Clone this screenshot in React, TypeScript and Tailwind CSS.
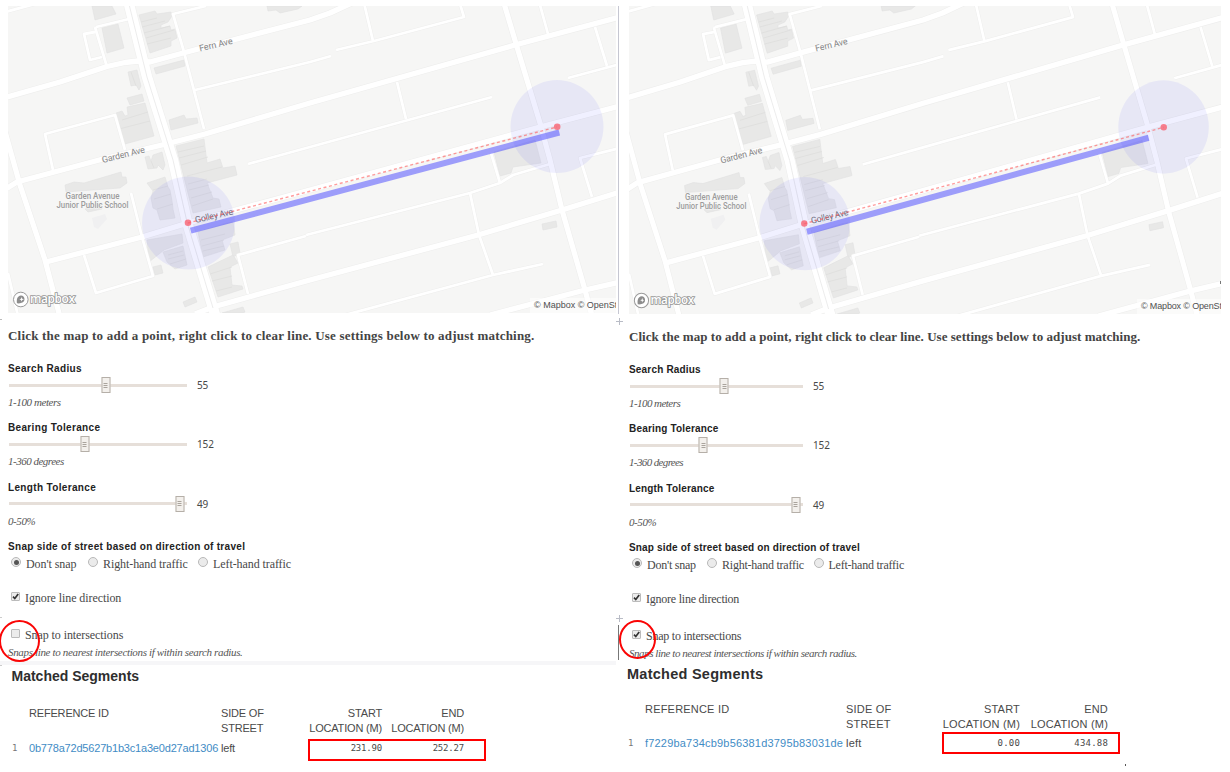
import clsx from "clsx";

type Side = "left" | "right";

const BUILDINGS = [
  "92,6 112,6 116,14 95,20",
  "102,28 118,24 124,48 107,53",
  "139,15 155,11 157,14 171,12 172,16 168,22 161,25 161,28 170,26 171,30 175,29 177,38 171,41 171,46 150,53",
  "154,68 184,60 185,66 156,74",
  "128,72 137,70 141,86 139,90 136,85 131,86",
  "127,98 142,94 144,101 130,105",
  "127,107 145,103 154,136 125,144 116,113 122,111 125,116 128,115",
  "169,120 184,115 186,119 197,118 198,123 171,130",
  "176,146 204,139 207,163 220,159 223,168 235,166 237,175 207,183 213,198 219,199 221,207 193,213",
  "145,157 149,156 151,161 153,155 162,152 165,165 163,170 158,165 157,168 148,169",
  "65,185 74,182 84,183 121,172 122,177 126,177 127,183 120,188 66,192",
  "85,209 101,205 102,209 88,212",
  "147,183 165,177 168,187 170,190 172,201 173,209 175,218 160,220 157,210 153,208 151,198 153,191",
  "147,240 182,234 183,243 164,250 149,262",
  "163,252 183,246 187,265 175,269 167,262",
  "153,267 161,265 163,273 155,275",
  "198,232 227,223 233,222 235,235 230,237 222,240 225,250 203,257",
  "230,244 238,242 240,253 233,257",
  "208,267 233,255 238,263 230,267 232,285 242,286 243,289 218,297",
  "183,302 195,297 197,302 185,307",
  "222,313 243,307 245,312 243,313",
  "267,6 302,6 298,9 280,13 276,10 268,11",
  "494,152 535,140 541,163 513,167 511,173 500,176",
  "542,224 556,221 557,227 543,230",
];

const SEAMS =
  "M141,22 157,18M142,27 165,21M144,33 170,26M146,38 174,30M147,44 171,38M119,129 150,121M122,120 148,112M178,152 204,146M179,158 206,151M181,165 208,157M187,176 222,167M188,184 207,179M189,190 209,185M191,198 212,192M192,206 213,199M131,72 136,86M151,161 154,168M153,190 168,186M154,199 171,194M157,209 173,204M168,255 183,251M168,259 184,255M170,264 186,259M201,240 225,234M202,246 224,240M203,251 224,246M210,274 232,267M212,281 232,276M216,291 232,287";

const MAJOR =
  "M4,98 60,82 107,66.5 125,62.5 138,61 150,62 185,52.5 310,20 330,13 345,6 352,3M4,190 17,182 103,159 162,145 205,134 310,103 515,45 620,17M46,262 142,237 188,223 310,190 540,127 620,106M195,314 213,307 310,280 478,235 562,210 620,192M490,315 585,290 620,282";
const CROSS =
  "M503,0 517,47 540,123 550,160 562,210 585,290 592,316M4,128 13,160 20,185 45,260 60,317";
const MINOR =
  "M96,27 129,19M95,27 107,67M95,32 84,34 90,60 102,57M206,6 173,14 184,52 204,129M195,90 310,62 331,56M336,50 374,41 464,17 460,4M364,3 373,41M540,5 548,34M595,27 607,66M568,78 620,64M397,82 406,119M248,164 310,147 492,97M53,170 45,134 115,115 125,150M592,197 580,158 620,148M491,153 500,183M306,235 470,193 500,183 513,175 550,164M470,193 479,235 493,275M345,315 493,275 543,264M306,236 238,255 248,294M84,255 96,293 153,276 142,237 131,193M8,273 18,316M5,12 35,4";

const AVENUE = "M128,0 147,77 173,160 187,222 213,308 216,318";

function StreetMap({ side }: { side: Side }) {
  const left = side === "left";
  return (
    <div className={clsx("relative overflow-hidden bg-[#f6f6f5]", left ? "h-[307px] w-[608px]" : "h-[308px] w-[592px]")}>
      <svg viewBox="8 6 608 307" preserveAspectRatio="none" className="block h-full w-full" fill="none">
        <g fill="#e8e8e7" stroke="#e1e1e0" strokeWidth="0.6">
          {BUILDINGS.map((points) => (
            <polygon key={points} points={points} />
          ))}
        </g>
        <path d={SEAMS} stroke="#dcdcdb" strokeWidth="0.7" />
        <path d="M92,218 105,214 107,219 98,229 94,227Z" fill="#f0f0f1" />
        <g stroke="#eeeeed" strokeLinejoin="round">
          <path d={MINOR} strokeWidth="3.8" />
          <path d={MAJOR} strokeWidth="6.4" />
          <path d={CROSS} strokeWidth="6.4" />
          <path d={AVENUE} strokeWidth="11.5" />
        </g>
        <g stroke="#fff" strokeLinejoin="round">
          <path d={MINOR} strokeWidth="2.8" />
          <path d={MAJOR} strokeWidth="5.3" />
          <path d={CROSS} strokeWidth="5.2" />
          <path d={AVENUE} strokeWidth="10.4" />
        </g>
        <path d="M128,0 147,77 173,160 187,222 213,308" stroke="#eaeaea" strokeWidth="0.9" />
        <g fontFamily="Roboto, sans-serif" fontSize="9" fill="#858585" textAnchor="middle" stroke="#f8f8f8" strokeWidth="1.2" paintOrder="stroke">
          <text transform="translate(216.5 47.6) rotate(-13)" textLength="34">Fern Ave</text>
          <text transform="translate(124 157.7) rotate(-14)" textLength="44">Garden Ave</text>
          <text transform="translate(214.7 218.7) rotate(-13)" textLength="39" fill="#777">Golley Ave</text>
          <g fontSize="8.3" fontWeight="500" fill="#9c9c9c" strokeWidth="1">
            <text x="92.5" y="199.2" textLength="54" lengthAdjust="spacingAndGlyphs">Garden Avenue</text>
            <text x="92.5" y="208.2" textLength="72" lengthAdjust="spacingAndGlyphs">Junior Public School</text>
          </g>
        </g>
        <g fill="#0000ff" fillOpacity="0.06">
          <circle cx="188.5" cy="223" r="46.5" />
          <circle cx="557" cy="126.6" r="46.5" />
        </g>
        <path d={left ? "M190.7,230.7 559.3,132.5" : "M190.7,231 541.7,137.3"} stroke="#4444ff" strokeOpacity="0.5" strokeWidth="6" />
        <path d="M188,223 557,127" stroke="#ff4a4a" strokeOpacity="0.55" strokeWidth="1.4" strokeDasharray="3 2.6" />
        <g fill="#fa5a6a" fillOpacity="0.75">
          <circle cx="188" cy="222.8" r="3.3" />
          <circle cx="557.2" cy="126.8" r="3.3" />
        </g>
        <circle cx="20.8" cy="299.5" r="7.3" fill="#fff" stroke="#999" strokeWidth="1" />
        <path d="M17,303.3C16.4,300 17,295.8 21,295.4A3.7,3.7 0 0 1 21.6,302.7C20,303.3 18.6,303.6 17,303.3Z" fill="#8d8d8d" />
        <path d="M21.6,297 22.2,298.7 23.9,299.3 22.2,299.9 21.6,301.5 21,299.9 19.4,299.3 21,298.7Z" fill="#fff" />
        <text x="30" y="303.3" textLength="45" fontFamily="'Open Sans', sans-serif" fontSize="12" fontWeight="600" fill="#fff" stroke="#969696" strokeWidth="1.7" paintOrder="stroke">mapbox</text>
      </svg>
      <div className={clsx("absolute bottom-0 right-0 h-[15px] whitespace-nowrap bg-white/50 pl-1 font-['Liberation_Sans',sans-serif] text-[9px] leading-[15px] text-[#505050]", left ? "w-[86px]" : "w-[84px] tracking-[-0.15px]")}>
        © Mapbox © OpenSt
      </div>
    </div>
  );
}

function Slider({ side, label, value, at, hint, hintClass }: { side: Side; label: string; value: string; at: number; hint: string; hintClass: string }) {
  const left = side === "left";
  return (
    <div className="h-[59.3px]">
      <div className={clsx("h-4 font-['Liberation_Sans',sans-serif] text-[10px] font-bold leading-[15px] text-[#222]", left ? "tracking-[0.34px]" : "tracking-[0.18px]")}>{label}</div>
      <div className="flex h-4 items-center">
        <div className={clsx("relative ml-[1.4px] h-[3px] bg-[#e6dfd9]", left ? "w-[178px]" : "w-[173px]")}>
          <div className="absolute -top-[6.5px] flex h-4 w-[9px] -translate-x-1/2 flex-col items-center justify-center gap-px border border-[#b5afa8] bg-[#f3f0ec]" style={{ left: `${at}%` }}>
            <i className="h-px w-[4px] bg-[#aaa49d]" />
            <i className="h-px w-[4px] bg-[#aaa49d]" />
            <i className="h-px w-[4px] bg-[#aaa49d]" />
          </div>
        </div>
        <span className="ml-[9.5px] font-['Noto_Sans',sans-serif] text-[10px] leading-4 text-[#484848]">{value}</span>
      </div>
      <div className={clsx("mt-[2px] h-[15px] text-[11px] italic leading-[15px] text-[#555]", hintClass)}>{hint}</div>
    </div>
  );
}

function Radio({ on = false }: { on?: boolean }) {
  return (
    <span className="-mt-[3px] flex size-[10px] shrink-0 items-center justify-center rounded-full border border-[#b8b8b8] bg-[#ebebeb]">
      {on && <i className="size-[5px] rounded-full bg-[#555]" />}
    </span>
  );
}

function Checkbox({ on = false }: { on?: boolean }) {
  return (
    <span className="-mt-[3px] flex size-[9px] shrink-0 rounded-[1px] border border-[#bbb] bg-[#ececec]">
      {on && (
        <svg viewBox="0 0 7 7" className="size-[7px]">
          <path d="M1,3.6 2.8,5.5 6.2,1" fill="none" stroke="#333" strokeWidth="1.7" />
        </svg>
      )}
    </span>
  );
}

function Settings({ side }: { side: Side }) {
  const left = side === "left";
  const text = left ? "tracking-[-0.08px]" : "tracking-[-0.23px]";
  return (
    <div className="whitespace-nowrap font-['Liberation_Serif',serif] text-[12px] text-[#484848]">
      <p className={clsx("mt-[13px] h-5 text-[13px] font-bold leading-5 text-[#444]", left ? "tracking-[0.2px]" : "tracking-[0.04px]")}>
        Click the map to add a point, right click to clear line. Use settings below to adjust matching.
      </p>
      <div className="mt-[15px]">
        <Slider side={side} label="Search Radius" value="55" at={54.2} hint="1-100 meters" hintClass={left ? "tracking-[-0.42px]" : "tracking-[-0.55px]"} />
        <Slider side={side} label="Bearing Tolerance" value="152" at={42.2} hint="1-360 degrees" hintClass={left ? "tracking-[-0.5px]" : "tracking-[-0.63px]"} />
        <Slider side={side} label="Length Tolerance" value="49" at={95.6} hint="0-50%" hintClass="tracking-[-0.4px]" />
      </div>
      <div className={clsx("h-[17px] font-['Liberation_Sans',sans-serif] text-[10px] font-bold leading-[15px] text-[#222]", left ? "tracking-[0.3px]" : "tracking-[0.17px]")}>
        Snap side of street based on direction of travel
      </div>
      <div className={clsx("flex h-4 items-center pl-[3px]", text)}>
        <Radio on />
        <span className={clsx("ml-[5px]", left ? "w-[62px]" : "w-[60px]")}>Don't snap</span>
        <Radio />
        <span className={clsx("ml-[5px]", left ? "w-[95px]" : "w-[91.5px]")}>Right-hand traffic</span>
        <Radio />
        <span className="ml-[5px]">Left-hand traffic</span>
      </div>
      <div className={clsx("mt-[18px] flex h-4 items-center pl-[3px]", text)}>
        <Checkbox on />
        <span className="ml-[5px]">Ignore line direction</span>
      </div>
      <div className={clsx("mt-[21px] flex h-4 items-center pl-[3px]", text)}>
        <Checkbox on={!left} />
        <span className="ml-[5px]">Snap to intersections</span>
      </div>
      <div className={clsx("mt-px h-4 text-[11px] italic leading-4 text-[#555]", left ? "tracking-[-0.34px]" : "tracking-[-0.45px]")}>
        Snaps line to nearest intersections if within search radius.
      </div>
    </div>
  );
}

function Segments({ side, id, start, end }: { side: Side; id: string; start: string; end: string }) {
  const left = side === "left";
  const cols = left ? "grid-cols-[17px_192px_78px_83px_82px]" : "grid-cols-[18px_201px_80px_94px_88px]";
  const mono = "text-right font-['DejaVu_Sans_Mono',monospace] text-[9px] leading-[15px]";
  return (
    <section className={clsx("whitespace-nowrap font-['Liberation_Sans',sans-serif] text-[11px] leading-[15px] text-[#4a4a4a]", left ? "pl-3" : "pl-[9px]")}>
      <h2 className={clsx("font-bold leading-5 text-[#2e2e2e]", left ? "-ml-[0.5px] text-[14px]" : "text-[14.5px] tracking-[0.26px]")}>Matched Segments</h2>
      <div className={clsx("grid", cols, left ? "mt-[20px] tracking-[-0.18px]" : "mt-[18px] tracking-[0.2px]")}>
        <span />
        <span>REFERENCE ID</span>
        <span>SIDE OF<br />STREET</span>
        <span className="flex flex-col items-end"><span>START</span><span>LOCATION (M)</span></span>
        <span className="text-right">END<br />LOCATION (M)</span>
      </div>
      <div className={clsx("grid", cols, left ? "mt-[5px] tracking-[-0.19px]" : "mt-[4px] tracking-[0.19px]")}>
        <span className={clsx("font-['DejaVu_Sans_Mono',monospace] text-[9px] text-[#777]", !left && "pl-px")}>1</span>
        <span className="text-[#3f8cc5]">{id}</span>
        <span>left</span>
        <span className={mono}>{start}</span>
        <span className={mono}>{end}</span>
      </div>
    </section>
  );
}

function Cross({ className }: { className: string }) {
  return (
    <svg viewBox="0 0 7 7" className={clsx("absolute size-[7px]", className)}>
      <path d="M3.5,0V7M0,3.5H7" stroke="#b9bcc6" strokeWidth="1" />
    </svg>
  );
}

export default function App() {
  return (
    <main className="relative flex h-[772px] w-[1230px] overflow-hidden bg-white">
      <section className="w-[618px] shrink-0 pt-[6px]">
        <div className="pl-2">
          <StreetMap side="left" />
          <Settings side="left" />
        </div>
        <div className="mt-[1.1px] h-1 w-[616px] bg-[#f6f6f8]" />
        <div className="pt-[1px]">
          <Segments side="left" id="0b778a72d5627b1b3c1a3e0d27ad1306" start="231.90" end="252.27" />
        </div>
      </section>
      <section className="w-[612px] shrink-0 pt-[6px]">
        <div className="pl-[11px]">
          <StreetMap side="right" />
          <Settings side="right" />
        </div>
        <div className="pt-[3.1px]">
          <Segments side="right" id="f7229ba734cb9b56381d3795b83031de" start="0.00" end="434.88" />
        </div>
      </section>

      <div className="absolute left-[618px] top-[6px] h-[308px] w-px bg-[#c6c7d2]" />
      <div className="absolute left-[618px] top-[625px] h-[35px] w-px bg-[#777]" />
      <Cross className="left-[615.5px] top-[317.5px]" />
      <Cross className="left-[615.5px] top-[615px]" />
      <div className="absolute left-0 top-[319px] h-px w-[2px] bg-[#bbb]" />
      <div className="absolute left-0 top-[617px] h-px w-[2px] bg-[#ccc]" />
      <div className="absolute left-0 top-[665px] h-px w-[2px] bg-[#ccc]" />
      <div className="absolute left-[1220px] top-[281px] h-[3px] w-px bg-[#777]" />
      <div className="absolute left-[1125px] top-[764px] h-[2px] w-px bg-[#555]" />
      <div className="absolute -left-px top-[620px] h-[42px] w-[41px] rounded-[50%] border-2 border-[#fa0505]" />
      <div className="absolute left-[619px] top-[620px] h-[39px] w-[37px] rounded-[50%] border-2 border-[#fa0505]" />
      <div className="absolute left-[308px] top-[739px] h-[22px] w-[178px] border-2 border-[#f00]" />
      <div className="absolute left-[942px] top-[732px] h-[22px] w-[178px] border-2 border-[#f00]" />
    </main>
  );
}
